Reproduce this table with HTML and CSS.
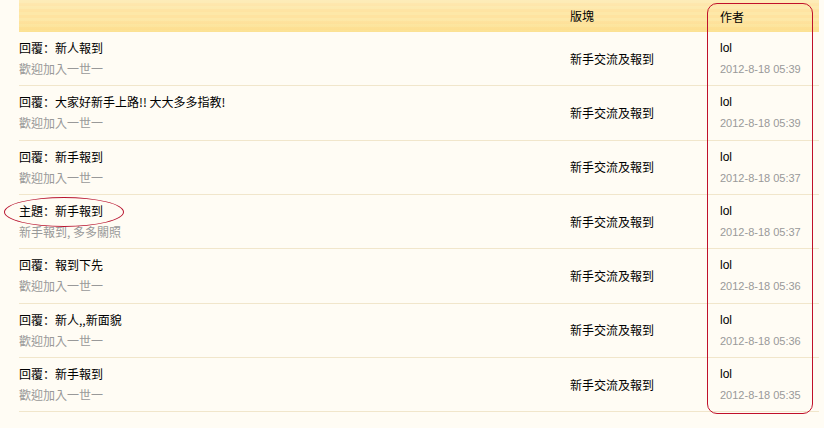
FILE: index.html
```html
<!DOCTYPE html>
<html>
<head>
<meta charset="utf-8">
<link rel="stylesheet" href="styles.css">
</head>
<body>
<div class="page">
  <div class="list">
    <div class="head">
      <div class="c-title"></div>
      <div class="c-board">版塊</div>
      <div class="c-author">作者</div>
    </div>
    <div class="row">
      <div class="c-title"><div class="t">回覆：新人報到</div><div class="s">歡迎加入一世一</div></div>
      <div class="c-board">新手交流及報到</div>
      <div class="c-author"><div class="a">lol</div><div class="d">2012-8-18 05:39</div></div>
    </div>
    <div class="row">
      <div class="c-title"><div class="t">回覆：大家好新手上路!! 大大多多指教!</div><div class="s">歡迎加入一世一</div></div>
      <div class="c-board">新手交流及報到</div>
      <div class="c-author"><div class="a">lol</div><div class="d">2012-8-18 05:39</div></div>
    </div>
    <div class="row">
      <div class="c-title"><div class="t">回覆：新手報到</div><div class="s">歡迎加入一世一</div></div>
      <div class="c-board">新手交流及報到</div>
      <div class="c-author"><div class="a">lol</div><div class="d">2012-8-18 05:37</div></div>
    </div>
    <div class="row">
      <div class="c-title"><div class="t">主題：新手報到</div><div class="s">新手報到, 多多關照</div></div>
      <div class="c-board">新手交流及報到</div>
      <div class="c-author"><div class="a">lol</div><div class="d">2012-8-18 05:37</div></div>
    </div>
    <div class="row">
      <div class="c-title"><div class="t">回覆：報到下先</div><div class="s">歡迎加入一世一</div></div>
      <div class="c-board">新手交流及報到</div>
      <div class="c-author"><div class="a">lol</div><div class="d">2012-8-18 05:36</div></div>
    </div>
    <div class="row">
      <div class="c-title"><div class="t">回覆：新人,,新面貌</div><div class="s">歡迎加入一世一</div></div>
      <div class="c-board">新手交流及報到</div>
      <div class="c-author"><div class="a">lol</div><div class="d">2012-8-18 05:36</div></div>
    </div>
    <div class="row">
      <div class="c-title"><div class="t">回覆：新手報到</div><div class="s">歡迎加入一世一</div></div>
      <div class="c-board">新手交流及報到</div>
      <div class="c-author"><div class="a">lol</div><div class="d">2012-8-18 05:35</div></div>
    </div>
  </div>
  <div class="mark-rect"></div>
  <div class="mark-ellipse"></div>
</div>
</body>
</html>
```
FILE: styles.css
```css
html, body {
  margin: 0;
  padding: 0;
  background: #fffcf4;
}
body {
  width: 824px;
  height: 428px;
  overflow: hidden;
  font-family: "Noto Sans CJK TC", "Liberation Sans", sans-serif;
  font-size: 12px;
  color: #000;
}
.page {
  position: relative;
  width: 824px;
  height: 428px;
}
.list {
  margin-left: 19px;
  width: 800px;
}
.head {
  display: flex;
  height: 32px;
  align-items: center;
  background-color: #fee3a0;
  background-image: linear-gradient(to bottom, rgba(255,255,255,0.2), rgba(255,255,255,0) 40%, rgba(0,0,0,0) 60%, rgba(250,210,100,0.3)), repeating-linear-gradient(to bottom, #fde8a8 0px, #fde8a8 3px, #fee3a0 3px, #fee3a0 6px);
}
.c-title {
  width: 551px;
  flex: none;
}
.c-board {
  width: 150px;
  flex: none;
}
.c-author {
  flex: 1;
}
.row {
  display: flex;
  align-items: center;
  height: 54.33px;
  box-sizing: border-box;
  border-bottom: 1px solid #f1e6cb;
}
.row .c-title, .row .c-author {
  align-self: flex-start;
  padding-top: 8px;
}
.t, .a {
  line-height: 16px;
  height: 16px;
  white-space: nowrap;
}
.t {
  font-family: "Noto Sans CJK SC", "Noto Sans CJK TC", sans-serif;
}
.a {
  font-family: "Liberation Sans", sans-serif;
}
.s, .d {
  margin-top: 5px;
  line-height: 16px;
  color: #999;
  white-space: nowrap;
}
.d {
  font-family: "Liberation Sans", sans-serif;
  font-size: 11px;
}
.c-board {
  line-height: 16px;
}
.mark-rect {
  position: absolute;
  left: 707px;
  top: 3px;
  width: 104px;
  height: 409px;
  border: 1px solid #c0102a;
  border-radius: 10px;
}
.mark-ellipse {
  position: absolute;
  left: 4px;
  top: 197px;
  width: 118px;
  height: 28px;
  border: 1px solid #b81530;
  border-radius: 50%;
}
```
